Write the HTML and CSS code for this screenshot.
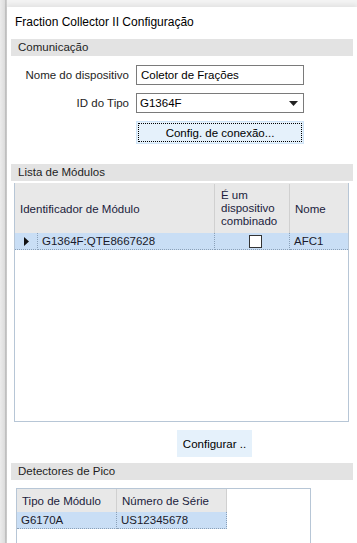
FILE: index.html
```html
<!DOCTYPE html>
<html lang="pt">
<head>
    <meta charset="UTF-8">
    <meta name="viewport" content="width=device-width, initial-scale=1.0">
    <title>Fraction Collector II Configuração</title>
    <link rel="stylesheet" href="styles.css">
</head>
<body>
    <div class="window">
        <div class="title">Fraction Collector II Configuração</div>

        <!-- Comunicação -->
        <div class="section-header">Comunicação</div>
        <div class="form-grid">
            <label for="device_name">Nome do dispositivo</label>
            <div class="textbox" id="device_name">Coletor de Frações</div>

            <label for="type_id">ID do Tipo</label>
            <div class="combo" id="type_id">
                <span>G1364F</span>
                <svg width="9" height="5" viewBox="0 0 9 5"><path d="M0 0h9L4.5 5z" fill="#222"/></svg>
            </div>

            <span></span>
            <button class="btn btn-focus">Config. de conexão...</button>
        </div>

        <!-- Lista de Módulos -->
        <div class="section-header">Lista de Módulos</div>
        <div class="grid modules">
            <div class="grid-head">
                <div class="hcell c-id">Identificador de Módulo</div>
                <div class="hcell c-comb">É um dispositivo combinado</div>
                <div class="hcell c-name">Nome</div>
            </div>
            <div class="grid-row selected">
                <div class="rowhead">
                    <svg width="5" height="9" viewBox="0 0 5 9"><path d="M0 0l5 4.5L0 9z" fill="#111"/></svg>
                </div>
                <div class="cell c-id2">G1364F:QTE8667628</div>
                <div class="cell c-comb center"><span class="checkbox"></span></div>
                <div class="cell c-name">AFC1</div>
            </div>
        </div>
        <div class="btn-row">
            <button class="btn">Configurar ..</button>
        </div>

        <!-- Detectores de Pico -->
        <div class="section-header">Detectores de Pico</div>
        <div class="grid detectors">
            <div class="grid-head short">
                <div class="hcell c-type">Tipo de Módulo</div>
                <div class="hcell c-serial">Número de Série</div>
            </div>
            <div class="grid-row selected">
                <div class="cell c-type">G6170A</div>
                <div class="cell c-serial">US12345678</div>
            </div>
        </div>
    </div>
</body>
</html>
```

FILE: styles.css
```css
body {
    margin: 0;
    height: 543px;
    overflow: hidden;
    font-family: 'Liberation Sans', Arial, sans-serif;
    font-size: 11.5px;
    color: #000;
    background: linear-gradient(to right, #ececec 0px, #dcdcdc 5px, #a8a8a8 6px, #f3f3f3 7px);
}

.window {
    margin: 7px 0 0 7px;
    height: 536px;
    padding: 0 4px;
    background-color: #fff;
    box-shadow: 0 -3px 4px rgba(0, 0, 0, 0.06);
}

.title {
    height: 32px;
    line-height: 30px;
    padding-left: 4px;
    font-size: 12px;
}

.section-header {
    height: 17px;
    line-height: 17px;
    padding-left: 7px;
    background-color: #e3e3e3;
    color: #1e1e1e;
}

.form-grid {
    display: grid;
    grid-template-columns: 118px 168px;
    column-gap: 7px;
    grid-template-rows: 20px 20px 23px;
    row-gap: 8px;
    padding-top: 9px;
    padding-bottom: 20px;
    align-items: center;
}

.form-grid label {
    text-align: right;
    color: #1e1e1e;
}

.textbox,
.combo {
    box-sizing: border-box;
    height: 20px;
    line-height: 18px;
    border: 1px solid #7a7a7a;
    padding: 0 4px;
}

.combo {
    display: flex;
    justify-content: space-between;
    align-items: center;
    padding: 0 5px 0 3px;
}

.btn {
    font-family: inherit;
    font-size: inherit;
    color: #000;
    height: 23px;
    background-color: #e5f1fb;
    border: none;
    padding: 0;
    cursor: pointer;
}

.btn-focus {
    border: 1px solid #cfe4f7;
    outline: 1px dotted #000;
    outline-offset: -3px;
}

.grid {
    box-sizing: border-box;
    border: 1px solid #b7c6d6;
    border-top: none;
    background-color: #fff;
}

.modules {
    margin: 2px 4px 0 3px;
    height: 239px;
}

.grid-head {
    display: flex;
    height: 49px;
    background-color: #e8e8e8;
    border-top: 1px solid #e8e8e8;
}

.grid-head.short {
    height: 23px;
}

.hcell {
    box-sizing: border-box;
    display: flex;
    align-items: center;
    padding-left: 5px;
    border-right: 1px solid #d0d0d0;
    color: #201c3c;
}

.grid-row {
    display: flex;
    height: 17px;
    line-height: 17px;
}

.selected {
    background-color: #c9def5;
}

.rowhead {
    box-sizing: border-box;
    width: 23px;
    display: flex;
    align-items: center;
    justify-content: center;
    border-right: 1px dotted #8aa0b8;
    border-bottom: 1px dotted #8aa0b8;
}

.cell {
    box-sizing: border-box;
    padding-left: 4px;
    border-right: 1px dotted #8aa0b8;
    border-bottom: 1px dotted #8aa0b8;
    color: #1a1a2a;
}

.center {
    display: flex;
    align-items: center;
    justify-content: center;
    padding-left: 0;
}

.checkbox {
    box-sizing: border-box;
    width: 13px;
    height: 13px;
    border: 1px solid #333;
    background-color: #fff;
}

.c-id { width: 200px; }
.c-id2 { width: 177px; }
.c-comb { width: 75px; line-height: 13px; padding-left: 6px; }
.c-name { width: 58px; border-right: none; }

.btn-row {
    display: flex;
    padding: 8px 0 6px 166px;
}

.btn-row .btn {
    width: 75px;
    height: 27px;
}

.detectors {
    margin: 8px 0 0 5px;
    width: 295px;
    height: 60px;
    border-top: 1px solid #b7c6d6;
}

.detectors .grid-head,
.detectors .grid-row {
    width: max-content;
    border-top: none;
}

.c-type { width: 100px; }
.c-serial { width: 110px; }
```
